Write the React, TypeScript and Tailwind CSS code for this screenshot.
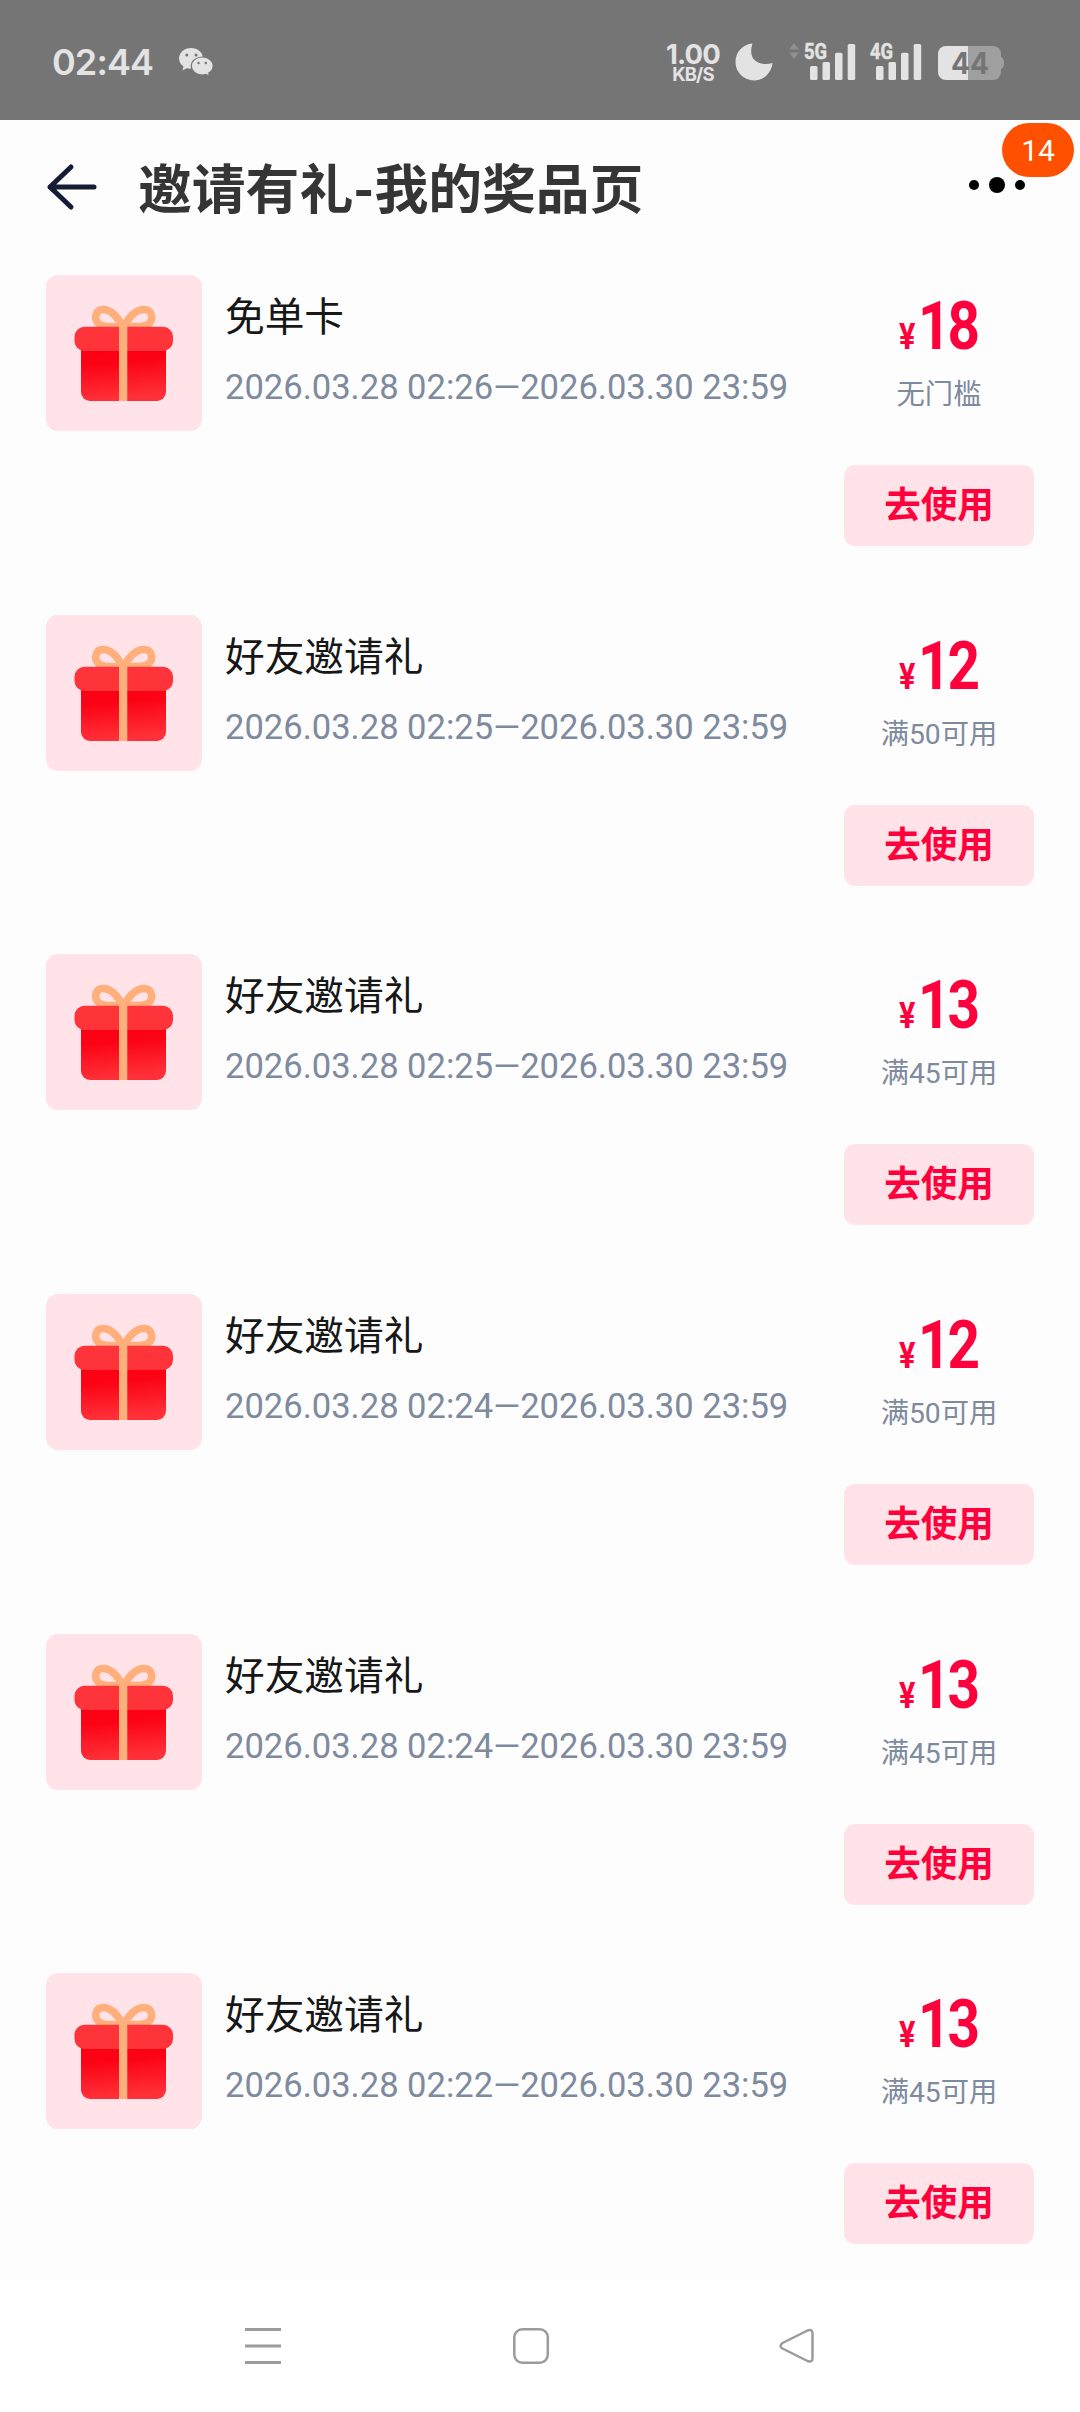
import React from "react";

interface Prize {
    name: string;
    start: string;
    end: string;
    amount: number;
    condition: string;
}

const prizes: Prize[] = [
    { name: "免单卡", start: "2026.03.28 02:26", end: "2026.03.30 23:59", amount: 18, condition: "无门槛" },
    { name: "好友邀请礼", start: "2026.03.28 02:25", end: "2026.03.30 23:59", amount: 12, condition: "满50可用" },
    { name: "好友邀请礼", start: "2026.03.28 02:25", end: "2026.03.30 23:59", amount: 13, condition: "满45可用" },
    { name: "好友邀请礼", start: "2026.03.28 02:24", end: "2026.03.30 23:59", amount: 12, condition: "满50可用" },
    { name: "好友邀请礼", start: "2026.03.28 02:24", end: "2026.03.30 23:59", amount: 13, condition: "满45可用" },
    { name: "好友邀请礼", start: "2026.03.28 02:22", end: "2026.03.30 23:59", amount: 13, condition: "满45可用" },
];

function WechatIcon() {
    return (
        <svg width="36" height="30" viewBox="0 0 36 30" className="ml-[25px]">
            <path d="M13 1C6.200 1 1 5.700 1 11.500c0 3.300 1.700 6 4.500 8l-1 4 4.300-2.300c1.200.3 2.400.5 3.700.5C19 21.700 25 17.500 25 11.500S19.800 1 13 1z" fill="#e3e3e3" />
            <circle cx="8.800" cy="8" r="1.500" fill="#757575" />
            <circle cx="18" cy="8" r="1.500" fill="#757575" />
            <path
                d="M24.300 10c-6.200 0-11 4-11 9s4.800 9 11 9c1.300 0 2.500-.2 3.600-.5l3.700 1.900-.9-3.300c2.700-1.600 4.500-4.200 4.500-7.100 0-5-4.900-9-10.900-9z"
                fill="#e3e3e3"
                stroke="#757575"
                strokeWidth="1.200"
            />
            <circle cx="20.500" cy="16" r="1.200" fill="#757575" />
            <circle cx="27.800" cy="16" r="1.200" fill="#757575" />
        </svg>
    );
}

function SignalIcon({ label }: { label: string }) {
    return (
        <svg width="52" height="40" viewBox="0 0 52 40" fill="#e3e3e3" className="overflow-visible">
            <text x="0" y="18" fontSize="21.500" fontWeight="700" fontFamily="Roboto, sans-serif" stroke="#e3e3e3" strokeWidth="0.500" textLength="23" lengthAdjust="spacingAndGlyphs">
                {label}
            </text>
            <rect x="6" y="25" width="7.500" height="14" rx="1.500" />
            <rect x="18.500" y="21" width="7.500" height="18" rx="1.500" />
            <rect x="31" y="11.700" width="7.500" height="27.300" rx="1.500" />
            <rect x="43.700" y="3" width="7.500" height="36" rx="1.500" />
        </svg>
    );
}

function BatteryIcon() {
    return (
        <svg width="68" height="36" viewBox="0 0 68 36" className="ml-[15px] mt-[4px]">
            <clipPath id="battery-level">
                <rect width="31" height="36" />
            </clipPath>
            <path d="M61 11.500c4 0 6 2 6 6.500s-2 6.500-6 6.500z" fill="#9f9f9f" />
            <rect x="1" y="1" width="63" height="34" rx="8" fill="#9f9f9f" />
            <rect x="1" y="1" width="63" height="34" rx="8" fill="#e3e3e3" clipPath="url(#battery-level)" />
            <text x="14" y="29" fontSize="30" fontWeight="700" fontFamily="Inter, sans-serif" fill="#757575" textLength="38" lengthAdjust="spacingAndGlyphs">
                44
            </text>
        </svg>
    );
}

function StatusBar() {
    return (
        <div className="flex h-[120px] items-start justify-between bg-[#757575] pr-[75px] pl-[52px] text-[#e3e3e3]">
            <div className="flex items-start pt-[47px] font-[Inter,sans-serif]">
                <span className="w-[101px] text-[36px] leading-[30px] font-semibold tracking-[-0.900px] whitespace-nowrap">02:44</span>
                <WechatIcon />
            </div>
            <div className="flex items-start pt-[41px] font-[Inter,sans-serif]">
                <div className="flex w-[56px] flex-col items-center gap-[3px] pt-[3px] font-bold whitespace-nowrap">
                    <span className="text-[27.500px] leading-[20px] tracking-[-0.800px]">1.00</span>
                    <span className="text-[18.500px] leading-[14px] tracking-[-0.800px]">KB/S</span>
                </div>
                <svg width="38" height="38" viewBox="0 0 38 38" className="ml-[14px] mt-[2px]">
                    <path d="M17.500.500C8 1 .5 9 .5 18.800A18.500 18.500 0 0 0 19 37.500c9.500 0 17.500-7.500 18.500-17.500C30.500 22 23.500 21 19.500 17 15.500 13 15.500 7 17.500.500z" fill="#e3e3e3" />
                </svg>
                <svg width="10" height="16" viewBox="0 0 10 16" fill="#909090" className="mt-[2px] mr-[5px] ml-[16px]">
                    <path d="M5 0l5 6.500H0zM5 16l5-6.500H0z" />
                </svg>
                <SignalIcon label="5G" />
                <div className="w-[14px]" />
                <SignalIcon label="4G" />
                <BatteryIcon />
            </div>
        </div>
    );
}

function Header() {
    return (
        <header className="flex h-[155px] items-start pl-[46px]">
            <svg width="52" height="48" viewBox="0 0 52 48" className="mt-[43px]" fill="none" stroke="#151c33" strokeWidth="5" strokeLinecap="round" strokeLinejoin="round">
                <path d="M48 24H4M25 4L4 24l21 20" />
            </svg>
            <h1 className="ml-[40px] pt-[36px] text-[53.800px] leading-[70px] font-bold whitespace-nowrap text-[#353535]">邀请有礼-我的奖品页</h1>
            <div className="relative ml-auto h-[80px] w-[111px]">
                <div className="flex items-center gap-[10px] pt-[57px]">
                    <span className="size-[10px] rounded-full bg-black" />
                    <span className="size-[16px] rounded-full bg-black" />
                    <span className="size-[10px] rounded-full bg-black" />
                </div>
                <span className="absolute top-[3px] right-[6px] flex h-[54px] w-[72px] items-center justify-center rounded-full bg-[#ff5000] text-[30px] text-white">
                    14
                </span>
            </div>
        </header>
    );
}

function GiftIcon() {
    return (
        <svg width="156" height="156" viewBox="0 0 156 156">
            <defs>
                <linearGradient id="gift-box" x1="0" y1="0" x2="0.150" y2="1">
                    <stop offset="0" stopColor="#fb0012" />
                    <stop offset="0.300" stopColor="#fb0214" />
                    <stop offset="1" stopColor="#ff3039" />
                </linearGradient>
            </defs>
            <path d="M35 74h85v43a9 9 0 0 1-9 9H44a9 9 0 0 1-9-9z" fill="url(#gift-box)" />
            <path
                d="M76 51C72 42 65 34.500 57 34.500c-7.500 0-9 8.500-5.500 13C55 52 62 52 76 51M78.500 51c4-9 11.500-16.500 19.500-16.500 7.500 0 9.500 8.500 6 13C100.500 52 93.500 52 78.500 51"
                fill="none"
                stroke="#ffaf7b"
                strokeWidth="7.500"
                strokeLinejoin="round"
            />
            <rect x="28.500" y="51.700" width="98.500" height="24.300" rx="10" fill="#ff333a" />
            <rect x="73" y="46" width="8.300" height="80" fill="#ffaf7b" />
        </svg>
    );
}

function PrizeRow({ prize }: { prize: Prize }) {
    return (
        <li className="flex h-[339.700px] items-start pr-[46px] pl-[46px]">
            <div className="size-[156px] shrink-0 rounded-[12px] bg-[#ffe3e8]">
                <GiftIcon />
            </div>
            <div className="ml-[23px] flex-1 whitespace-nowrap">
                <p className="mt-[15px] text-[39.700px] leading-[56px] text-[#171717]">{prize.name}</p>
                <p className="mt-[18px] text-[34.550px] leading-[46px] text-[#7e8a9e]">
                    {prize.start}—{prize.end}
                </p>
            </div>
            <div className="flex w-[190px] shrink-0 flex-col items-center text-[#ff003c]">
                <div className="mt-[19px] flex h-[64px] w-[80px] items-baseline font-bold whitespace-nowrap">
                    <span className="w-[20px] origin-left scale-x-85 text-[36px] leading-[64px]">¥</span>
                    <span className="origin-left scale-x-84 text-[67.500px] leading-[64px] tracking-[-3.500px]">{prize.amount}</span>
                </div>
                <p className="mt-[17px] text-[28.300px] leading-[40px] text-[#7e8a9e]">{prize.condition}</p>
                <button className="mt-[50px] h-[81px] w-full rounded-[11px] bg-[#ffe3e8] text-[36.500px] leading-[81px] font-bold">去使用</button>
            </div>
        </li>
    );
}

function NavBar() {
    return (
        <nav className="h-[132px] bg-white">
            <svg width="1080" height="132" viewBox="0 0 1080 132" fill="none" stroke="#9b9b9b" strokeWidth="2.500">
                <path d="M245 49.500h36M245 66h36M245 82.500h36" strokeWidth="3" />
                <rect x="514.300" y="49.200" width="33.500" height="33.500" rx="8" />
                <path d="M782.500 63l25-12.500q5-2 5 3v24.500q0 5-5 3l-25-12.500q-4-2.500 0-5.500z" strokeLinejoin="round" />
            </svg>
        </nav>
    );
}

export default function App() {
    return (
        <div className="flex h-[2412px] w-[1080px] flex-col overflow-hidden bg-[#fdfdfd] font-[Roboto,'Noto_Sans_CJK_SC',sans-serif]">
            <StatusBar />
            <Header />
            <ul className="h-[2005px] overflow-hidden">
                {prizes.map((prize, i) => (
                    <PrizeRow key={i} prize={prize} />
                ))}
            </ul>
            <NavBar />
        </div>
    );
}
